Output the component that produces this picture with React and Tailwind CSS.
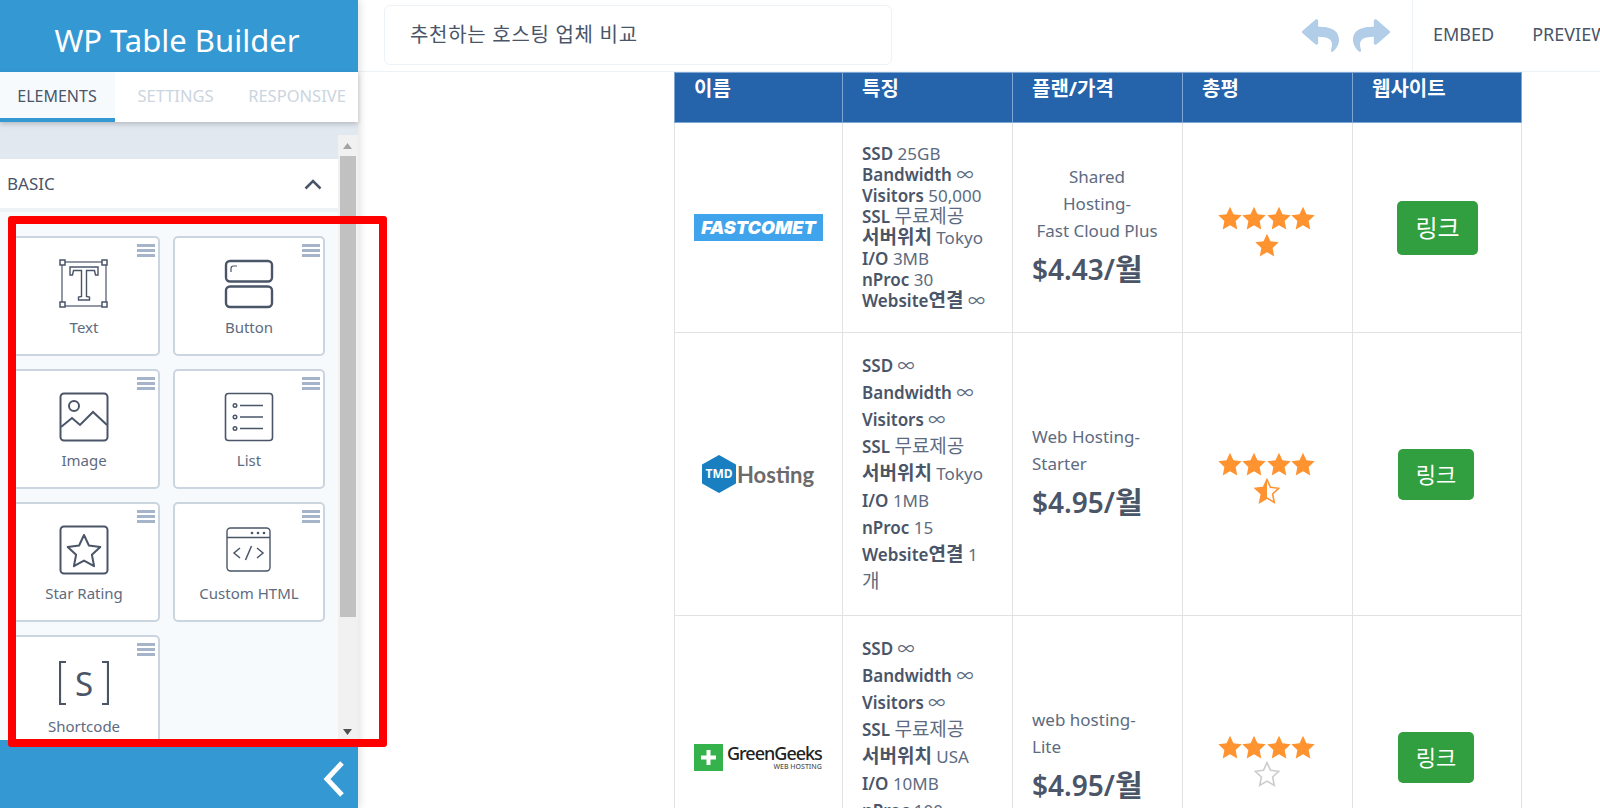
import React from "react";
import { FaReply, FaShare } from "react-icons/fa";

function Bars() {
  return (
    <div className="absolute top-[6px] right-[3px] flex w-[18px] flex-col gap-[2px]">
      <div className="h-[3px] bg-[#a5b4c8]" />
      <div className="h-[3px] bg-[#a5b4c8]" />
      <div className="h-[3px] bg-[#a5b4c8]" />
    </div>
  );
}

const TextIcon = () => (
  <svg width="50" height="50" viewBox="0 0 50 50" fill="none" stroke="#4a5568">
    <rect x="3" y="3" width="44" height="44" strokeWidth="1.2" />
    <g fill="#fff" strokeWidth="1.5">
      <rect x="1" y="1" width="5" height="5" />
      <rect x="43" y="1" width="5" height="5" />
      <rect x="1" y="43" width="5" height="5" />
      <rect x="43" y="43" width="5" height="5" />
    </g>
    <path d="M11 8h28v8h-2.5l-1-4.5h-8v26l3 .5v3h-11v-3l3-.5v-26h-8l-1 4.5H11z" strokeWidth="1.4" />
  </svg>
);
const ButtonIcon = () => (
  <svg width="50" height="50" viewBox="0 0 50 50" fill="none" stroke="#4a5568">
    <rect x="2" y="2" width="46" height="20.5" rx="4" strokeWidth="2.4" />
    <rect x="2" y="27.5" width="46" height="20.5" rx="4" strokeWidth="2.4" />
    <path d="M7 13V9.5Q7 7 9.5 7H13" strokeWidth="1.2" />
  </svg>
);
const ImageIcon = () => (
  <svg width="50" height="50" viewBox="0 0 50 50" fill="none" stroke="#4a5568">
    <rect x="1.5" y="1.5" width="47" height="47" rx="3.5" strokeWidth="2" />
    <circle cx="15" cy="14" r="5" strokeWidth="2" />
    <path d="M2 35l11-9 8 7 13-13 14 13" strokeWidth="2" />
  </svg>
);
const ListIcon = () => (
  <svg width="50" height="50" viewBox="0 0 50 50" fill="none" stroke="#4a5568">
    <rect x="1.5" y="1.5" width="47" height="47" rx="3" strokeWidth="1.6" />
    <g strokeWidth="1.4">
      <circle cx="11" cy="13.500" r="1.800" />
      <circle cx="11" cy="25" r="1.800" />
      <circle cx="11" cy="36.500" r="1.800" />
      <path d="M16 13.500h23M16 25h23M16 36.500h23" />
    </g>
  </svg>
);
const StarIcon = () => (
  <svg width="50" height="50" viewBox="0 0 50 50" fill="none" stroke="#4a5568">
    <rect x="1.500" y="1.500" width="47" height="47" rx="3.500" strokeWidth="2" />
    <path d="M25 10l4.900 10.500 11.400 1.400-8.400 7.900 2.200 11.400L25 35.600l-10.100 5.600 2.200-11.400-8.400-7.900 11.400-1.400z" strokeWidth="2" strokeLinejoin="round" />
  </svg>
);
const HtmlIcon = () => (
  <svg width="46" height="46" viewBox="0 0 46 46" fill="none" stroke="#4a5568">
    <rect x="1" y="1" width="43" height="43" rx="3.500" strokeWidth="1.400" />
    <path d="M1 10.500h43" strokeWidth="1.400" />
    <g fill="#4a5568" stroke="none">
      <circle cx="26" cy="6" r="1.300" />
      <circle cx="32" cy="6" r="1.300" />
      <circle cx="38" cy="6" r="1.300" />
    </g>
    <path d="M14 21l-6 5 6 5M31 21l6 5-6 5M25.500 19l-6 14" strokeWidth="1.500" />
  </svg>
);
const ShortIcon = () => (
  <div className="flex h-[50px] w-[50px] items-center justify-between text-[#4a5568]">
    <svg width="8" height="44" viewBox="0 0 8 44" fill="none" stroke="#4a5568" strokeWidth="2.2"><path d="M7 1H1v42h6" /></svg>
    <span className="text-[33px] leading-none">S</span>
    <svg width="8" height="44" viewBox="0 0 8 44" fill="none" stroke="#4a5568" strokeWidth="2.2"><path d="M1 1h6v42H1" /></svg>
  </div>
);

function Card({ icon, label }) {
  return (
    <div className="relative flex h-[120px] w-[152px] flex-col items-center rounded-[5px] border-2 border-[#cbd5e0] bg-white pt-[21px] text-[15px] leading-[20px] text-[#5d6b80]">
      <Bars />
      <div className="flex h-[50px] items-center justify-center">{icon}</div>
      <div className="mt-[8px] whitespace-nowrap">{label}</div>
    </div>
  );
}

const starPath = "M12 1.500l3.200 7.100 7.600.9-5.600 5.300 1.500 7.700L12 18.600l-6.700 3.900 1.500-7.700L1.200 9.500l7.600-.9z";
function Star({ kind = "full" }) {
  return (
    <svg width="26" height="26" viewBox="0 0 24 24" className="-mx-[0.75px]">
      {kind === "full" && <path d={starPath} fill="#ff9330" />}
      {kind === "half" && (
        <>
          <path d={starPath} fill="#fff" stroke="#ff9330" strokeWidth="1.500" />
          <path d="M12 1.500V18.600l-6.700 3.900 1.500-7.700L1.200 9.500l7.600-.9z" fill="#ff9330" />
        </>
      )}
      {kind === "empty" && <path d={starPath} fill="#fff" stroke="#cccccc" strokeWidth="1.500" />}
    </svg>
  );
}
function Stars({ last }) {
  return (
    <div className="mx-auto mt-[7px] flex w-[110px] -translate-x-[1px] flex-wrap justify-center gap-y-[1px]">
      <Star /><Star /><Star /><Star /><Star kind={last} />
    </div>
  );
}

function Ko({ text, big }) {
  return String(text).split(/([\uAC00-\uD7A3]+)/).map((part, i) =>
    /[\uAC00-\uD7A3]/.test(part)
      ? <span key={i} className={big ? "text-[30px] leading-none" : "text-[19px] leading-none"}>{part}</span>
      : <React.Fragment key={i}>{part}</React.Fragment>
  );
}

const Line = ({ b, t }) => (
  <div className="whitespace-nowrap">
    <span className="font-semibold"><Ko text={b} /></span> <span className="font-normal text-[#5d6b80]"><Ko text={t} /></span>
  </div>
);

function Features({ lines, lh }) {
  return (
    <td className={`border border-[#e2e2e2] pt-[19px] pr-[20px] pb-[20px] pl-[19px] align-middle text-[17px] text-[#4a5568] ${lh}`}>
      {lines.map((l, i) => <Line key={i} b={l[0]} t={l[1]} />)}
    </td>
  );
}

function Plan({ children, center, price }) {
  return (
    <td className="border border-[#e2e2e2] pt-[20px] pr-[20px] pb-[23px] pl-[19px] align-middle text-[17px] leading-[27px] text-[#5d6b80]">
      <div className={center ? "whitespace-nowrap text-center" : "whitespace-nowrap text-left"}>{children}</div>
      <div className="mt-[3px] -mb-[3px] text-[28px] leading-[45px] font-semibold whitespace-nowrap text-[#4a5568]"><Ko text={price} big /></div>
    </td>
  );
}

function Link({ big }) {
  return (
    <td className="border border-[#e2e2e2] py-[20px] text-center align-middle">
      {big ? (
        <div className="ml-[44px] flex h-[54px] w-[81px] items-center justify-center rounded-[5px] bg-[#319e3f] text-[24px] text-white">링크</div>
      ) : (
        <div className="ml-[45px] flex h-[51px] w-[76px] items-center justify-center rounded-[5px] bg-[#319e3f] text-[22px] text-white">링크</div>
      )}
    </td>
  );
}

export default function App() {
  return (
    <div className="relative flex h-[808px] w-[1600px] overflow-hidden bg-white text-[#4a5568] [font-family:'Noto_Sans','Noto_Sans_CJK_KR',sans-serif]">
      <aside className="relative z-10 flex h-full w-[358px] shrink-0 flex-col bg-[#e2e8f0] shadow-[2px_0_8px_rgba(0,0,0,0.12)]">
        <div className="flex h-[72px] shrink-0 items-center justify-center bg-[#3498d3] pt-[8px] pr-[4px] text-[31px] text-white">WP Table Builder</div>
        <div className="flex h-[50px] shrink-0 bg-white text-[16.5px] shadow-[0_2px_5px_rgba(0,0,0,0.2)]">
          <div className="flex w-[115px] items-center justify-center border-b-[4px] border-[#3498d3] bg-[#f7fafc] pt-[2px] pr-[1px] text-[16px] text-[#4a5568]">ELEMENTS</div>
          <div className="flex w-[121px] items-center justify-center pb-[2px] text-[#cbd5e0]">SETTINGS</div>
          <div className="flex w-[122px] items-center justify-center pb-[2px] text-[#cbd5e0]">RESPONSIVE</div>
        </div>
        <div className="mt-[13px] flex min-h-0 flex-1">
          <div className="flex w-[338px] flex-col">
            <div className="h-[24px] shrink-0" />
            <div className="flex h-[53px] shrink-0 items-center justify-between border-b-[4px] border-[#edf2f7] bg-white pt-[1px] pr-[16px] pl-[7px] text-[17px]">
              <span>BASIC</span>
              <svg width="18" height="11" viewBox="0 0 18 11" fill="none" stroke="#4a5568" strokeWidth="2.500"><path d="M1.500 9.500L9 2l7.500 7.500" /></svg>
            </div>
            <div className="min-h-0 flex-1 overflow-hidden bg-[#f7fafc] pt-[24px] pl-[8px]">
              <div className="grid grid-cols-[152px_152px] gap-[13px]">
                <Card icon={<TextIcon />} label="Text" />
                <Card icon={<ButtonIcon />} label="Button" />
                <Card icon={<ImageIcon />} label="Image" />
                <Card icon={<ListIcon />} label="List" />
                <Card icon={<StarIcon />} label="Star Rating" />
                <Card icon={<HtmlIcon />} label="Custom HTML" />
                <Card icon={<ShortIcon />} label="Shortcode" />
              </div>
            </div>
          </div>
          <div className="flex w-[20px] flex-col items-center bg-[#f1f1f1] pr-[1px]">
            <div className="flex h-[21px] w-full items-center justify-center">
              <svg width="9" height="6" viewBox="0 0 9 6"><path d="M4.500 0L9 6H0z" fill="#a3a3a3" /></svg>
            </div>
            <div className="h-[461px] w-[16px] bg-[#c1c1c1]" />
            <div className="flex-1" />
            <div className="flex h-[17px] w-full items-center justify-center">
              <svg width="9" height="6" viewBox="0 0 9 6"><path d="M0 0h9L4.500 6z" fill="#505050" /></svg>
            </div>
          </div>
        </div>
        <div className="flex h-[68px] shrink-0 items-center justify-end bg-[#3498d3] pt-[10px] pr-[13px]">
          <svg width="22" height="36" viewBox="0 0 22 36" fill="none" stroke="#fff" strokeWidth="5"><path d="M19 2L4 18l15 16" /></svg>
        </div>
      </aside>

      <main className="flex min-w-0 flex-1 flex-col">
        <header className="flex h-[72px] shrink-0 items-stretch border-b border-[#edf2f7] bg-white">
          <div className="mt-[5px] ml-[26px] flex h-[60px] w-[508px] shrink-0 items-center rounded-[6px] border border-[#edf2f7] pl-[25px] text-[20px] tracking-[0.7px] whitespace-nowrap text-[#4a5568]">추천하는 호스팅 업체 비교</div>
          <div className="ml-[410px] flex shrink-0 items-center gap-[14px] text-[#b2cde8]">
            <FaReply size={37} />
            <FaShare size={37} />
          </div>
          <div className="ml-[22px] flex shrink-0 items-center gap-[38px] border-l border-[#edf2f7] pb-[3px] pl-[20px] text-[18px] whitespace-nowrap">
            <span>EMBED</span>
            <span>PREVIEW</span>
          </div>
        </header>
        <div className="ml-[316px]">
          <table className="w-[847px] table-fixed border-collapse">
            <thead>
              <tr className="h-[50px] bg-[#2563ab] text-[20px] leading-[26px] font-bold text-white">
                <th className="w-[168px] border border-[#7ea6d3] pt-[3px] pl-[19px] text-left align-top">이름</th>
                <th className="w-[170px] border border-[#7ea6d3] pt-[3px] pl-[19px] text-left align-top">특징</th>
                <th className="w-[170px] border border-[#7ea6d3] pt-[3px] pl-[19px] text-left align-top">플랜/가격</th>
                <th className="w-[170px] border border-[#7ea6d3] pt-[3px] pl-[19px] text-left align-top">총평</th>
                <th className="w-[169px] border border-[#7ea6d3] pt-[3px] pl-[19px] text-left align-top">웹사이트</th>
              </tr>
            </thead>
            <tbody>
              <tr className="h-[210px]">
                <td className="border border-[#e2e2e2] py-[20px] pr-[20px] pl-[19px] align-middle">
                  <div className="flex h-[27px] w-[129px] items-center justify-center bg-[#3fa4ec] pb-[1px] text-[18px] font-black text-white italic [font-family:'Inter',sans-serif]">FASTCOMET</div>
                </td>
                <Features lh="leading-[21px]" lines={[["SSD","25GB"],["Bandwidth","∞"],["Visitors","50,000"],["SSL","무료제공"],["서버위치","Tokyo"],["I/O","3MB"],["nProc","30"],["Website연결","∞"]]} />
                <Plan center price="$4.43/월">Shared<br />Hosting-<br />Fast Cloud Plus</Plan>
                <td className="border border-[#e2e2e2] align-middle"><Stars last="full" /></td>
                <Link big />
              </tr>
              <tr>
                <td className="border border-[#e2e2e2] py-[20px] pr-[10px] pl-[19px] align-middle">
                  <div className="flex items-center pl-[7px]">
                    <svg width="36" height="38" viewBox="0 0 36 38" className="shrink-0"><path d="M18 1l16 9v18l-16 9-16-9V10z" fill="#1a7fc1" stroke="#1a7fc1" strokeWidth="2" strokeLinejoin="round" /></svg>
                    <span className="-ml-[35px] w-[34px] shrink-0 text-center text-[12px] font-bold text-white">TMD</span>
                    <span className="ml-[1px] text-[22px] font-bold text-[#6b6b6b] [font-family:'Lato',sans-serif]">Hosting</span>
                  </div>
                </td>
                <Features lh="leading-[27px]" lines={[["SSD","∞"],["Bandwidth","∞"],["Visitors","∞"],["SSL","무료제공"],["서버위치","Tokyo"],["I/O","1MB"],["nProc","15"],["Website연결","1"],["","개"]]} />
                <Plan price="$4.95/월">Web Hosting-<br />Starter</Plan>
                <td className="border border-[#e2e2e2] align-middle"><Stars last="half" /></td>
                <Link />
              </tr>
              <tr>
                <td className="border border-[#e2e2e2] py-[20px] pr-[4px] pl-[19px] align-middle">
                  <div className="flex items-center">
                    <div className="flex h-[27px] w-[29px] shrink-0 items-center justify-center bg-[#35b24b]">
                      <svg width="15" height="15" viewBox="0 0 15 15"><path d="M5.500 0h4v5.500H15v4H9.500V15h-4V9.500H0v-4h5.500z" fill="#fff" /></svg>
                    </div>
                    <div className="ml-[4px] flex flex-col items-end">
                      <span className="text-[18px] leading-[20px] font-medium tracking-[-1px] text-[#222]">GreenGeeks</span>
                      <span className="text-[7px] leading-[8px] font-medium text-[#555]">WEB HOSTING</span>
                    </div>
                  </div>
                </td>
                <Features lh="leading-[27px]" lines={[["SSD","∞"],["Bandwidth","∞"],["Visitors","∞"],["SSL","무료제공"],["서버위치","USA"],["I/O","10MB"],["nProc","100"],["Website연결","∞"],["","개"]]} />
                <Plan price="$4.95/월">web hosting-<br />Lite</Plan>
                <td className="border border-[#e2e2e2] align-middle"><Stars last="empty" /></td>
                <Link />
              </tr>
            </tbody>
          </table>
        </div>
      </main>

      <div className="pointer-events-none absolute top-[216px] left-[8px] z-20 h-[531px] w-[379px] rounded-[3px] border-[8px] border-[#ff0000]" />
    </div>
  );
}
